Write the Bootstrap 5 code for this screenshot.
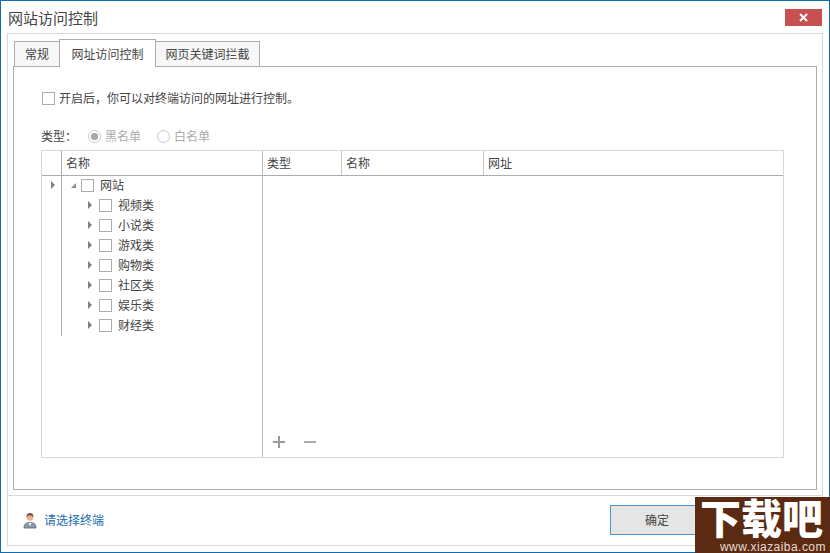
<!DOCTYPE html>
<html lang="zh">
<head>
<meta charset="utf-8">
<title>网站访问控制</title>
<link rel="stylesheet" href="https://cdn.jsdelivr.net/npm/bootstrap@5.3.0/dist/css/bootstrap.min.css">
<style>
html,body{margin:0;height:553px;overflow:hidden;background:#fff}
body{font-family:"Noto Sans CJK SC","Liberation Sans",sans-serif;font-size:12px;line-height:16px;color:#444}
.win{position:relative;width:830px;height:553px;border:1px solid #0f6cb0;background:#fff}
.titlebar{height:32px;padding:7px 0 0 7px;font-size:15px;line-height:20px}
.closex{width:37px;height:17px;margin-top:1px;margin-right:7px;background:#c75050;border:0;padding:0}
.frame{height:513px;margin:0 6px;border:1px solid #d6d9d9}
.tabzone{padding:5px 5px 0}
.tabstrip{height:27px;border:0;flex-wrap:nowrap;padding-left:1px}
.tabstrip .nav-link{height:25px;margin:2px 0 0;padding:3px 0 0;text-align:center;font-size:12px;line-height:18px;color:#444;background:#f7f7f7;border:1px solid #acacac;border-bottom:0;border-radius:0}
.tabstrip .nav-link.active{height:28px;margin-top:0;padding-top:5px;background:#fff;color:#444;border-color:#acacac;position:relative;z-index:2}
.t1{width:46px}.t2{width:97px;margin-left:-1px!important}.t3{width:105px;margin-left:-1px!important}
.panel{height:424px;border:1px solid #acacac;padding:24px 32px 0 27px;background:#fff}
.cb{display:block;flex:none;width:13px;height:13px;border:1px solid #acacac;background:#fff}
.rd{display:block;flex:none;width:13px;height:13px;border:1px solid #c8c8c8;border-radius:50%;background:#fff}
.rd.on{background:radial-gradient(circle,#a8a8a8 0 3.4px,#fff 4px)}
.enable{height:14px;margin-left:1px;gap:4px}
.typerow{height:16px;margin-top:23px;color:#444}
.typerow .lbl{width:47px}
.typerow .opt{color:#aaa;gap:4px;margin-right:16px}
.grid{height:308px;margin-top:6px;border:1px solid #d6d6d6}
.leftpane{width:220px;flex:none}
.rightpane{border-left:1px solid #bcbcbc;flex:1 1 auto;min-width:0;height:306px}
.hdr{height:25px;border-bottom:1px solid #acacac;line-height:23px;color:#444}
.hdr>div{padding-left:4px;height:24px}
.gutter{width:19px;flex:none}
.hname{border-left:1px solid #acacac;padding-left:4px;height:24px;flex:1}
.body-left{height:160px}
.gcol{width:19px;flex:none;padding-top:5px;padding-left:9px}
.tree{border-left:1px solid #acacac;flex:1;height:160px;margin:0;padding:0;list-style:none}
.tree li{height:20px;display:flex;align-items:center;padding-bottom:2px}
.lvl0{padding-left:8px}.lvl1{padding-left:26px}
.tri{display:block;flex:none;width:0;height:0;border-top:4px solid transparent;border-bottom:4px solid transparent;border-left:4px solid #808080}
.lvl1 .tri{margin-right:7px}
.lvl1 .cb,.lvl0 .cb{margin-right:6px}
.lvl0 svg{margin-right:4px;flex:none}
.c1{width:79px;flex:none;border-right:1px solid #c8c8c8}
.c2{width:142px;flex:none;border-right:1px solid #c8c8c8}
.tools{margin-top:auto;height:30px;padding-left:10px;gap:19px;padding-bottom:1px}
.foot{height:50px;margin-top:5px;border-top:1px solid #d6d9d9;padding:0 0 0 15px;color:#1a6db3}
.foot .who{gap:7px;margin-top:-1px}
.okbtn{width:94px;height:30px;margin-top:-1px;margin-right:118px;padding:0;background:#e5e5e5;border:1px solid #4a95d6;border-radius:0;color:#444;font-size:12px;line-height:16px}
.logo{position:absolute;left:694px;top:496px;width:135px;height:56px;background:#5b2a12;color:#fff}
.logo .big{font-size:41px;line-height:41px;font-weight:900;padding-left:5px;margin-top:-1px;white-space:nowrap}
.logo .url{font-family:"Liberation Sans",sans-serif;font-size:12px;line-height:11px;padding-left:25px;margin-top:5px;color:#e9dcd4;letter-spacing:.45px;white-space:nowrap}
</style>
</head>
<body>
<div class="win d-flex flex-column">
  <div class="titlebar d-flex justify-content-between align-items-start flex-none">
    <span>网站访问控制</span>
    <button class="closex d-flex align-items-center justify-content-center" aria-label="关闭">
      <svg width="9" height="9" viewBox="0 0 9 9"><path d="M1 1 8 8M8 1 1 8" stroke="#fff" stroke-width="2"/></svg>
    </button>
  </div>
  <div class="frame">
    <div class="tabzone">
      <ul class="nav nav-tabs tabstrip">
        <li class="nav-item"><a class="nav-link t1" href="#">常规</a></li>
        <li class="nav-item"><a class="nav-link t2 active" href="#">网址访问控制</a></li>
        <li class="nav-item"><a class="nav-link t3" href="#">网页关键词拦截</a></li>
      </ul>
      <div class="panel">
        <div class="enable d-flex align-items-center"><span class="cb"></span><span>开启后，你可以对终端访问的网址进行控制。</span></div>
        <div class="typerow d-flex align-items-center">
          <span class="lbl">类型：</span>
          <span class="opt d-flex align-items-center"><span class="rd on"></span>黑名单</span>
          <span class="opt d-flex align-items-center"><span class="rd"></span>白名单</span>
        </div>
        <div class="grid d-flex">
          <div class="leftpane">
            <div class="hdr d-flex"><span class="gutter"></span><span class="hname">名称</span></div>
            <div class="body-left d-flex">
              <div class="gcol"><span class="tri"></span></div>
              <ul class="tree">
                <li class="lvl0"><svg width="7" height="7" viewBox="0 0 7 7"><path d="M6 1V6H1Z" fill="#8a8a8a"/></svg><span class="cb"></span><span>网站</span></li>
                <li class="lvl1"><span class="tri"></span><span class="cb"></span>视频类</li>
                <li class="lvl1"><span class="tri"></span><span class="cb"></span>小说类</li>
                <li class="lvl1"><span class="tri"></span><span class="cb"></span>游戏类</li>
                <li class="lvl1"><span class="tri"></span><span class="cb"></span>购物类</li>
                <li class="lvl1"><span class="tri"></span><span class="cb"></span>社区类</li>
                <li class="lvl1"><span class="tri"></span><span class="cb"></span>娱乐类</li>
                <li class="lvl1"><span class="tri"></span><span class="cb"></span>财经类</li>
              </ul>
            </div>
          </div>
          <div class="rightpane d-flex flex-column">
            <div class="hdr d-flex">
              <div class="c1">类型</div>
              <div class="c2">名称</div>
              <div class="flex-grow-1">网址</div>
            </div>
            <div class="tools d-flex align-items-center">
              <svg width="12" height="12" viewBox="0 0 12 12"><path d="M6 0V12M0 6H12" stroke="#999" stroke-width="2"/></svg>
              <svg width="12" height="12" viewBox="0 0 12 12"><path d="M0 6H12" stroke="#aaa" stroke-width="2"/></svg>
            </div>
          </div>
        </div>
      </div>
    </div>
    <div class="foot d-flex justify-content-between align-items-center">
      <div class="who d-flex align-items-center">
        <svg width="14" height="17" viewBox="0 0 14 17"><path d="M1 16C1 12 3 10.500 7 10.500S13 12 13 16Z" fill="#8a97a6" stroke="#5e6a78" stroke-width=".8"/><path d="M5.500 11 7 14 8.500 11Z" fill="#fff"/><circle cx="7" cy="5.500" r="3.300" fill="#e0b49a"/><path d="M3.600 5.500C3.300 2 5 1 7 1S10.700 2 10.400 5.500C9.500 4 8.500 3.600 7 3.600S4.500 4 3.600 5.500Z" fill="#8d5236"/></svg>
        <span>请选择终端</span>
      </div>
      <button class="btn okbtn">确定</button>
    </div>
  </div>
  <div class="logo">
    <div class="big">下载吧</div>
    <div class="url">www.xiazaiba.com</div>
  </div>
</div>
</body>
</html>
